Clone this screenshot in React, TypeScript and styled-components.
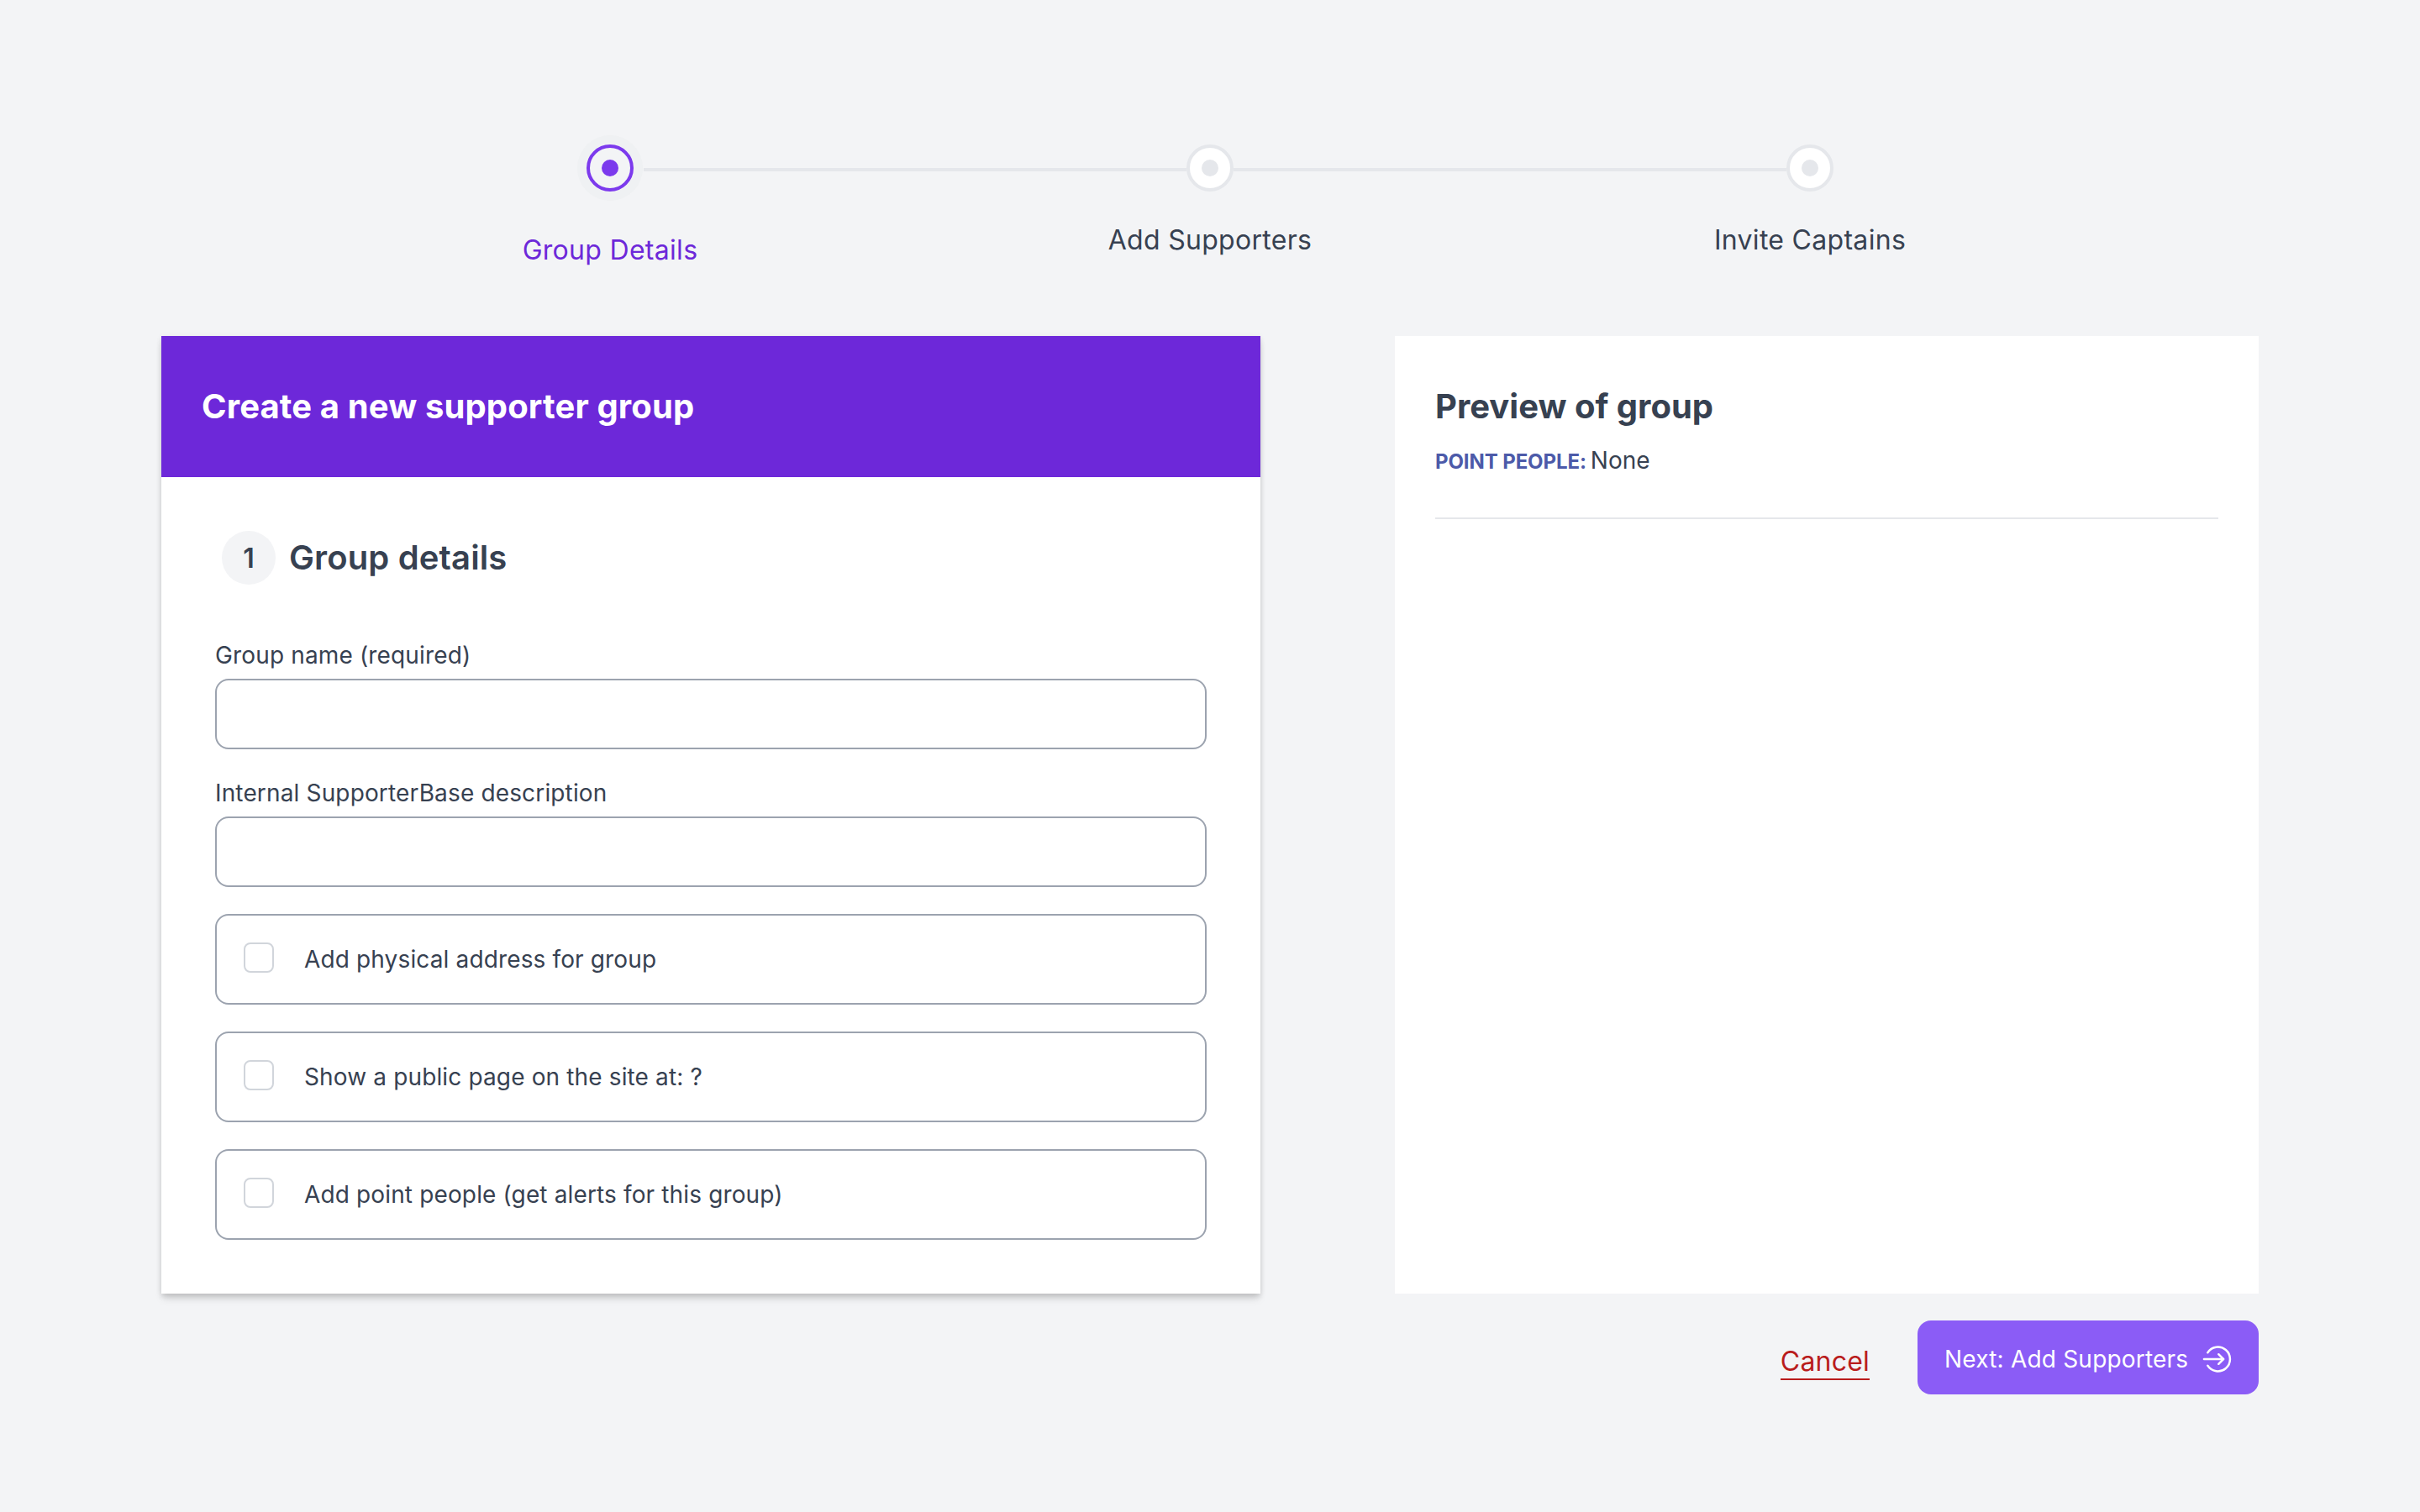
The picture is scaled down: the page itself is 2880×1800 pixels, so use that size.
import React from "react";
import styled, { createGlobalStyle } from "styled-components";

const GlobalStyle = createGlobalStyle`
  html, body { margin: 0; padding: 0; background: #f3f4f6; }
  * { box-sizing: border-box; }
  body {
    font-family: "Inter", "Liberation Sans", sans-serif;
    color: #374151;
  }
`;

const Page = styled.div`
  width: 2880px;
  min-height: 1800px;
  padding: 172px 192px 0;
  background: #f3f4f6;
`;

const Stepper = styled.ol`
  display: grid;
  grid-template-columns: repeat(3, 714px);
  justify-content: center;
  align-items: start;
  margin: 0 0 78px;
  padding: 0;
  list-style: none;
`;

const Step = styled.li`
  display: flex;
  flex-direction: column;
  align-items: center;
`;

const Track = styled.div`
  display: flex;
  align-items: flex-start;
  width: 100%;
`;

const Connector = styled.span<{ $hidden?: boolean; $before?: boolean; $after?: boolean }>`
  flex: 1;
  height: 4px;
  margin-top: 28px;
  margin-left: ${(p) => (p.$after ? "12px" : "0")};
  margin-right: ${(p) => (p.$before ? "12px" : "0")};
  background: ${(p) => (p.$hidden ? "transparent" : "#e5e7eb")};
`;

const Marker = styled.span<{ $active?: boolean }>`
  flex: none;
  display: flex;
  align-items: center;
  justify-content: center;
  width: 56px;
  height: 56px;
  border-radius: 50%;
  border: 4px solid ${(p) => (p.$active ? "#7c3aed" : "#e5e7eb")};
  background: ${(p) => (p.$active ? "transparent" : "#ffffff")};
  box-shadow: ${(p) => (p.$active ? "0 0 0 11px rgba(209, 213, 219, 0.1)" : "none")};
`;

const MarkerDot = styled.span<{ $active?: boolean }>`
  width: 20px;
  height: 20px;
  border-radius: 50%;
  background: ${(p) => (p.$active ? "#7c3aed" : "#e5e7eb")};
`;

const StepLabel = styled.span<{ $active?: boolean }>`
  margin-top: ${(p) => (p.$active ? "46px" : "34px")};
  font-size: 32px;
  line-height: 48px;
  font-weight: 400;
  letter-spacing: 0.3px;
  color: ${(p) => (p.$active ? "#6d28d9" : "#374151")};
`;

const Panels = styled.div`
  display: grid;
  grid-template-columns: 1308px 1028px;
  column-gap: 160px;
  align-items: stretch;
`;

const FormCard = styled.section`
  background: #ffffff;
  box-shadow: 0 4px 6px 0 rgba(0, 0, 0, 0.12), 0 8px 10px -2px rgba(0, 0, 0, 0.1), 0 0 8px rgba(0, 0, 0, 0.04);
`;

const FormHeader = styled.header`
  display: flex;
  align-items: center;
  height: 168px;
  padding: 0 48px;
  background: #6d28d9;
`;

const FormTitle = styled.h1`
  margin: 0;
  font-size: 40px;
  line-height: 56px;
  font-weight: 700;
  letter-spacing: 0.13px;
  color: #ffffff;
`;

const FormBody = styled.div`
  display: flex;
  flex-direction: column;
  padding: 64px;
`;

const SectionHeading = styled.div`
  display: flex;
  align-items: center;
  gap: 16px;
  margin: 0 0 64px 8px;
`;

const SectionNumber = styled.span`
  display: flex;
  align-items: center;
  justify-content: center;
  width: 64px;
  height: 64px;
  border-radius: 50%;
  background: #f3f4f6;
  font-size: 32px;
  font-weight: 600;
  color: #374151;
`;

const SectionTitle = styled.h2`
  margin: 0;
  font-size: 40px;
  line-height: 56px;
  font-weight: 600;
  letter-spacing: 0.14px;
  color: #374151;
`;

const Field = styled.label`
  display: flex;
  flex-direction: column;
  gap: 8px;
  margin-bottom: 32px;
`;

const FieldLabel = styled.span`
  font-size: 28px;
  line-height: 40px;
  font-weight: 400;
  letter-spacing: 0.15px;
  color: #374151;
`;

const TextInput = styled.input`
  width: 100%;
  height: 84px;
  padding: 0 24px;
  border: 2px solid #9ca3af;
  border-radius: 16px;
  background: #ffffff;
  font: inherit;
  outline: none;
`;

const OptionRow = styled.label<{ $last?: boolean }>`
  display: flex;
  align-items: flex-start;
  gap: 36px;
  padding: 32px;
  margin-bottom: ${(p) => (p.$last ? "0" : "32px")};
  border: 2px solid #9ca3af;
  border-radius: 16px;
  font-size: 28px;
  line-height: 40px;
  font-weight: 400;
  letter-spacing: 0.14px;
  color: #374151;
`;

const CheckBox = styled.input`
  appearance: none;
  flex: none;
  width: 36px;
  height: 36px;
  margin: 0;
  border: 2px solid #d1d5db;
  border-radius: 8px;
  background: #ffffff;
`;

const PreviewPanel = styled.aside`
  padding: 48px;
  background: #ffffff;
`;

const PreviewTitle = styled.h2`
  margin: 0;
  font-size: 40px;
  line-height: 72px;
  font-weight: 700;
  color: #374151;
`;

const PreviewMeta = styled.p`
  margin: 8px 0 0;
  padding-bottom: 46px;
  border-bottom: 2px solid #e5e7eb;
  font-size: 28px;
  line-height: 40px;
  color: #374151;
`;

const MetaKey = styled.span`
  margin-right: 5px;
  font-size: 24px;
  font-weight: 700;
  letter-spacing: -0.1px;
  color: #4c5aa9;
`;

const Footer = styled.footer`
  display: flex;
  justify-content: flex-end;
  align-items: center;
  gap: 57px;
  margin-top: 32px;
`;

const CancelLink = styled.a`
  margin-top: 12px;
  border-bottom: 2px solid #b91c1c;
  font-size: 32px;
  line-height: 40px;
  letter-spacing: 0.2px;
  color: #b91c1c;
  text-decoration: none;
`;

const NextButton = styled.button`
  display: flex;
  align-items: center;
  gap: 17px;
  height: 88px;
  width: 406px;
  padding: 4px 32px 0;
  border: 0;
  border-radius: 16px;
  background: #8b5cf6;
  font-family: inherit;
  font-size: 28px;
  font-weight: 400;
  letter-spacing: 0.2px;
  white-space: nowrap;
  color: #ffffff;
`;

const ArrowIcon = () => (
  <svg width="36" height="36" viewBox="0 0 36 36" fill="none" stroke="currentColor" strokeWidth="2.6" strokeLinecap="round" strokeLinejoin="round">
    <path d="M6.5 10A15 15 0 1 1 6.5 26" />
    <path d="M2 18h24" />
    <path d="M20 12l6 6-6 6" />
  </svg>
);

const steps = ["Group Details", "Add Supporters", "Invite Captains"];
const options = [
  "Add physical address for group",
  "Show a public page on the site at: ?",
  "Add point people (get alerts for this group)",
];

export default function App() {
  return (
    <>
      <GlobalStyle />
      <Page>
        <Stepper>
          {steps.map((label, i) => (
            <Step key={label}>
              <Track>
                <Connector $hidden={i === 0} $before={i === 0} />
                <Marker $active={i === 0}>
                  <MarkerDot $active={i === 0} />
                </Marker>
                <Connector $hidden={i === steps.length - 1} $after={i === 0} />
              </Track>
              <StepLabel $active={i === 0}>{label}</StepLabel>
            </Step>
          ))}
        </Stepper>
        <Panels>
          <FormCard>
            <FormHeader>
              <FormTitle>Create a new supporter group</FormTitle>
            </FormHeader>
            <FormBody>
              <SectionHeading>
                <SectionNumber>1</SectionNumber>
                <SectionTitle>Group details</SectionTitle>
              </SectionHeading>
              <Field>
                <FieldLabel>Group name (required)</FieldLabel>
                <TextInput type="text" />
              </Field>
              <Field>
                <FieldLabel>Internal SupporterBase description</FieldLabel>
                <TextInput type="text" />
              </Field>
              {options.map((text, i) => (
                <OptionRow key={text} $last={i === options.length - 1}>
                  <CheckBox type="checkbox" />
                  <span>{text}</span>
                </OptionRow>
              ))}
            </FormBody>
          </FormCard>
          <PreviewPanel>
            <PreviewTitle>Preview of group</PreviewTitle>
            <PreviewMeta>
              <MetaKey>POINT PEOPLE:</MetaKey>None
            </PreviewMeta>
          </PreviewPanel>
        </Panels>
        <Footer>
          <CancelLink href="#">Cancel</CancelLink>
          <NextButton type="button">
            Next: Add Supporters
            <ArrowIcon />
          </NextButton>
        </Footer>
      </Page>
    </>
  );
}
